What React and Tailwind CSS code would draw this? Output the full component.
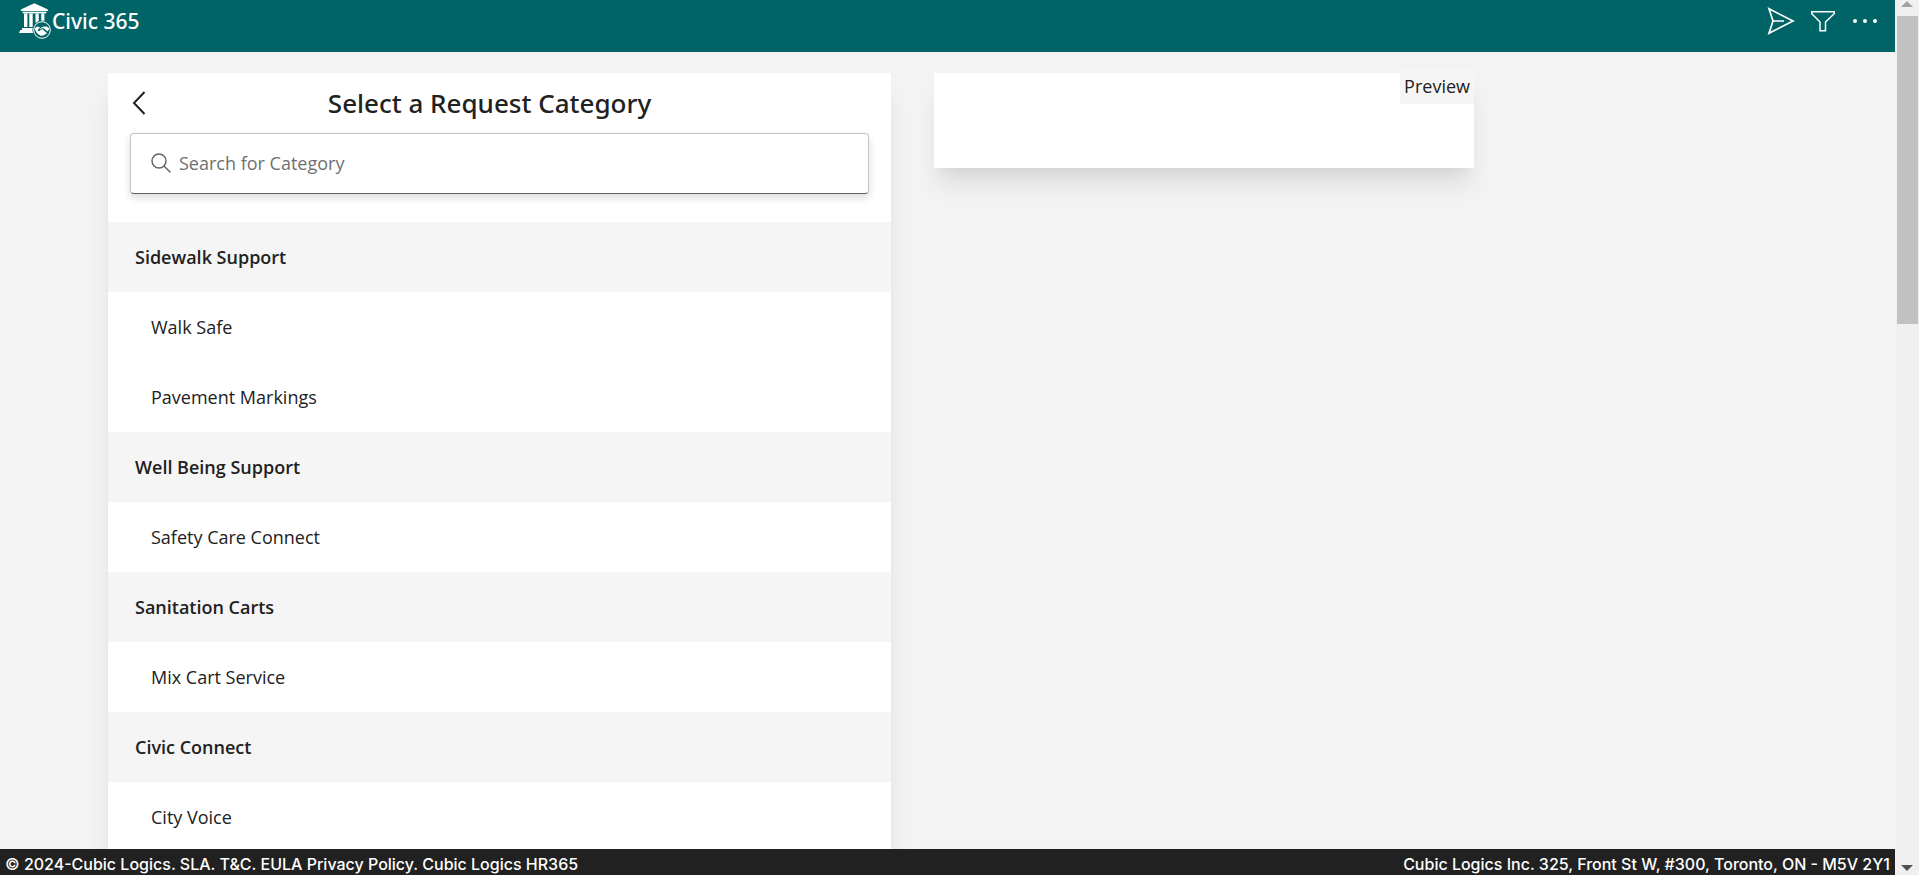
import React from "react";

const groups = [
  { name: "Sidewalk Support", items: ["Walk Safe", "Pavement Markings"] },
  { name: "Well Being Support", items: ["Safety Care Connect"] },
  { name: "Sanitation Carts", items: ["Mix Cart Service"] },
  { name: "Civic Connect", items: ["City Voice"] },
];

function Logo() {
  return (
    <svg viewBox="0 0 34 36" className="h-9 w-[34px]" fill="#fff" aria-hidden="true">
      <path d="M16.3 .3 L29.500 6.200 L30.300 8 H2.700 L3.300 6.200 Z" />
      <rect x="4.700" y="8.700" width="23.600" height="1.700" />
      <path d="M6 10.400h3.400V24H6zM11.300 10.400h3.400V24h-3.400zM17.500 10.400h3.200V20h-3.200zM23.200 10.400h3.200V20h-3.200z" />
      <path d="M4 25h13v2.500H4zM2.300 27h15l1.200 3H1z" />
      <circle cx="24" cy="27" r="9.600" fill="#006466" />
      <circle cx="24" cy="27" r="8.300" fill="none" stroke="#fff" strokeWidth="1" />
      <path d="M16.600 25.500l2.600-2 2.800.8-2.400 3.200 1.300.8 3.200-2.200 5 4.200-3.600 2.200-3 .3-3.300-2.300-1.600-2.500z" />
      <path d="M31.400 25.500l-2.600-2-4.400.2-2.600 2 .8.800 2.800-1.300 4.200 3.300z" />
      <path d="M21.500 26.800l2.800-1.600 5.400 4" fill="none" stroke="#006466" strokeWidth=".7" />
    </svg>
  );
}

export default function App() {
  return (
    <div className="flex h-screen overflow-hidden bg-[#f3f3f3] font-['Open_Sans',sans-serif] text-[#212121]">
      <div className="flex min-w-0 flex-1 flex-col">
        <header className="flex h-[52px] shrink-0 items-start justify-between bg-[#006466] pl-[18px] pr-4 text-white">
          <a href="#home" className="flex items-start pt-[3px]">
            <Logo />
            <span className="font-['Noto_Sans',sans-serif] text-[21px] font-medium leading-9">Civic 365</span>
          </a>
          <div className="flex h-[42px] items-center gap-4">
            <button aria-label="Send">
              <svg viewBox="0 0 28 28" className="size-7" fill="none" stroke="#fff" strokeWidth="1.700" aria-hidden="true">
                <path d="M2 1.800 L26 14 L2 26.200 L6 14 Z M6 14H17" />
              </svg>
            </button>
            <button aria-label="Filter">
              <svg viewBox="0 0 24 24" className="size-6" fill="none" stroke="#fff" strokeWidth="1.500" aria-hidden="true">
                <path d="M.8 2.800H23.200V4.800L14.500 13V21.800H9V13L.8 4.800Z" />
              </svg>
            </button>
            <button aria-label="More">
              <svg viewBox="0 0 28 28" className="size-7" fill="#fff" aria-hidden="true">
                <circle cx="4" cy="14" r="2" />
                <circle cx="14" cy="14" r="2" />
                <circle cx="24" cy="14" r="2" />
              </svg>
            </button>
          </div>
        </header>

        <main className="grid min-h-0 flex-1 grid-cols-[783fr_540fr_378fr] items-start gap-x-[43px] overflow-hidden pl-[108px] pt-[21px]">
          <section className="bg-white pb-20 shadow-[0_20px_25px_-5px_rgba(0,0,0,0.1),0_10px_10px_-5px_rgba(0,0,0,0.04)]">
            <div className="flex h-[60px] items-center pl-6 pr-[58px]">
              <button aria-label="Back">
                <svg viewBox="0 0 14 24" className="h-6 w-3.5" fill="none" stroke="#212121" strokeWidth="2" aria-hidden="true">
                  <path d="M12.500 1L2 12L12.500 23" />
                </svg>
              </button>
              <h1 className="flex-1 text-center font-['Noto_Sans',sans-serif] text-[26px] font-medium leading-9">Select a Request Category</h1>
            </div>
            <div className="px-[22px] pb-7">
              <label className="flex h-[61px] items-center gap-2 rounded border border-[#c4c4c4] border-b-[#616161] pb-0.5 pl-5 shadow-[0_4px_8px_rgba(0,0,0,0.14)]">
                <svg viewBox="0 0 20 20" className="size-5" fill="none" stroke="#616161" strokeWidth="1.400" aria-hidden="true">
                  <circle cx="8" cy="8" r="7" />
                  <path d="M13 13l6.500 6.500" />
                </svg>
                <input aria-label="Search for Category" placeholder="Search for Category" className="min-w-0 flex-1 bg-transparent text-lg outline-none placeholder:text-[#707070]" />
              </label>
            </div>
            {groups.map((g) => (
              <div key={g.name}>
                <h2 className="bg-[#f5f5f5] pl-[27px] text-lg font-semibold leading-[70px]">{g.name}</h2>
                {g.items.map((it) => (
                  <button key={it} className="block w-full pl-[43px] text-left text-lg leading-[70px]">{it}</button>
                ))}
              </div>
            ))}
          </section>
          <section className="relative h-[95px] bg-white shadow-[0_20px_25px_-5px_rgba(0,0,0,0.1),0_10px_10px_-5px_rgba(0,0,0,0.04)]">
            <div className="absolute -top-[5px] right-0 bg-[#f5f5f5] px-1 text-lg leading-9">Preview</div>
          </section>
        </main>

        <footer className="flex h-[26px] shrink-0 items-center justify-between bg-[#212121] px-[5px] pt-[3px] font-['Inter',sans-serif] text-base font-medium leading-6 text-white">
          <span>© 2024-Cubic Logics. SLA. T&amp;C. EULA Privacy Policy. Cubic Logics HR365</span>
          <span>Cubic Logics Inc. 325, Front St W, #300, Toronto, ON - M5V 2Y1</span>
        </footer>
      </div>

      <div className="flex w-6 shrink-0 flex-col items-center bg-[#f0f0f0]" aria-hidden="true">
        <svg viewBox="0 0 12 16" className="h-4 w-3 shrink-0" fill="#a3a3a3"><path d="M6 1L12 7H0Z" /></svg>
        <div className="h-[308px] w-[21px] bg-[#c1c1c1]" />
        <svg viewBox="0 0 12 16" className="mt-auto h-4 w-3 shrink-0" fill="#505050"><path d="M6 12L12 6H0Z" /></svg>
      </div>
    </div>
  );
}
